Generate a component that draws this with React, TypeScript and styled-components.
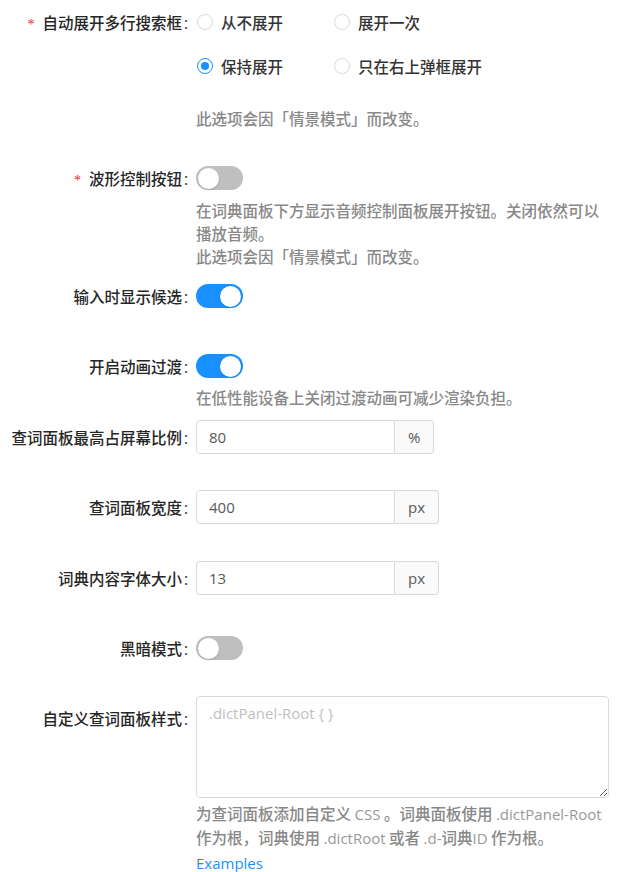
import React from "react";
import styled, { createGlobalStyle } from "styled-components";

const GlobalStyle = createGlobalStyle`
  html, body { margin: 0; padding: 0; background: #fff; }
  body {
    font-family: "Open Sans", "Noto Sans CJK SC", sans-serif;
    font-size: 15px;
    color: rgba(0, 0, 0, 0.85);
  }
  * { box-sizing: border-box; }
`;

const Form = styled.div`
  width: 633px;
  padding: 0 24px 0 0;
`;

const Item = styled.div<{ $mt: number }>`
  display: grid;
  grid-template-columns: 196px 1fr;
  margin-top: ${(p) => p.$mt}px;
`;

const Label = styled.div<{ $h: number }>`
  height: ${(p) => p.$h}px;
  line-height: ${(p) => p.$h}px;
  text-align: right;
  padding-right: 8px;
  font-family: "Noto Sans CJK SC", sans-serif;
  font-size: 15.5px;
  font-weight: 500;
  color: #262626;
  white-space: nowrap;
  &::after {
    content: ":";
    margin-left: 2px;
    font-family: "Open Sans", sans-serif;
  }
`;

const Required = styled.span`
  color: #f5222d;
  font-family: "Liberation Serif", serif;
  font-size: 14px;
  margin-right: 8px;
`;

const Control = styled.div`
  display: flex;
  flex-direction: column;
  align-items: flex-start;
  min-width: 0;
`;

const Line = styled.div<{ $h: number }>`
  height: ${(p) => p.$h}px;
  display: flex;
  align-items: center;
`;

const RadioGrid = styled.div`
  display: grid;
  grid-template-columns: 137px 170px;
  grid-auto-rows: 44px;
`;

const RadioItem = styled.label`
  display: flex;
  align-items: center;
  cursor: pointer;
  font-family: "Noto Sans CJK SC", sans-serif;
  font-size: 15.5px;
  font-weight: 500;
  color: #333;
  white-space: nowrap;
`;

const RadioCircle = styled.span<{ $on: boolean }>`
  width: 16px;
  height: 16px;
  margin-left: 1px;
  border-radius: 50%;
  border: 1px solid ${(p) => (p.$on ? "#1890ff" : "#d9d9d9")};
  background: #fff;
  display: flex;
  align-items: center;
  justify-content: center;
  margin-right: 8px;
  flex: none;
  &::after {
    content: "";
    width: 8px;
    height: 8px;
    border-radius: 50%;
    background: #1890ff;
    display: ${(p) => (p.$on ? "block" : "none")};
  }
`;

const Help = styled.div<{ $mt: number }>`
  margin-top: ${(p) => p.$mt}px;
  line-height: 23px;
  color: #888;
  font-family: "Noto Sans CJK SC", sans-serif;
  font-size: 15.5px;
  font-weight: 500;
`;

const Latin = styled.span`
  font-family: "Open Sans", sans-serif;
  font-size: 15px;
  font-weight: 400;
  color: #999;
`;

const Switch = styled.button<{ $on: boolean }>`
  position: relative;
  width: 47px;
  height: 24px;
  border: none;
  border-radius: 12px;
  padding: 0;
  margin: 0;
  cursor: pointer;
  background: ${(p) => (p.$on ? "#1890ff" : "#bfbfbf")};
  &::after {
    content: "";
    position: absolute;
    top: 1.5px;
    left: ${(p) => (p.$on ? "24px" : "1.5px")};
    width: 21px;
    height: 21px;
    border-radius: 50%;
    background: #fff;
    box-shadow: 0 1px 2px rgba(0, 0, 0, 0.15);
  }
`;

const InputGroup = styled.div`
  display: flex;
  height: 34px;
`;

const Input = styled.input`
  width: 199px;
  height: 34px;
  border: 1px solid #d9d9d9;
  border-radius: 4px 0 0 4px;
  padding: 0 12px;
  font-family: "Open Sans", sans-serif;
  font-size: 15px;
  color: #595959;
  outline: none;
`;

const Addon = styled.span`
  display: flex;
  align-items: center;
  height: 34px;
  padding: 0 13px;
  border: 1px solid #d9d9d9;
  border-left: none;
  border-radius: 0 4px 4px 0;
  background: #fafafa;
  color: #595959;
  font-family: "Open Sans", sans-serif;
  font-size: 15px;
`;

const TextArea = styled.textarea`
  width: 413px;
  height: 102px;
  border: 1px solid #d9d9d9;
  border-radius: 4px;
  padding: 5px 12px;
  line-height: 23px;
  font-family: "Open Sans", sans-serif;
  font-size: 15px;
  color: #595959;
  resize: vertical;
  outline: none;
  display: block;
  &::placeholder { color: #bfbfbf; }
`;

const Link = styled.a`
  color: #1890ff;
  text-decoration: none;
  font-family: "Open Sans", sans-serif;
  line-height: 23px;
  margin-top: 2px;
`;

const Radio = ({ on, children }: { on: boolean; children: React.ReactNode }) => (
  <RadioItem>
    <RadioCircle $on={on} />
    {children}
  </RadioItem>
);

const NumberField = ({ value, unit }: { value: string; unit: string }) => (
  <InputGroup>
    <Input defaultValue={value} />
    <Addon>{unit}</Addon>
  </InputGroup>
);

export default function App() {
  return (
    <>
      <GlobalStyle />
      <Form>
        <Item $mt={0}>
          <Label $h={44}>
            <Required>*</Required>自动展开多行搜索框
          </Label>
          <Control>
            <RadioGrid>
              <Radio on={false}>从不展开</Radio>
              <Radio on={false}>展开一次</Radio>
              <Radio on={true}>保持展开</Radio>
              <Radio on={false}>只在右上弹框展开</Radio>
            </RadioGrid>
            <Help $mt={19}>此选项会因「情景模式」而改变。</Help>
          </Control>
        </Item>

        <Item $mt={32}>
          <Label $h={32}>
            <Required>*</Required>波形控制按钮
          </Label>
          <Control>
            <Line $h={32}>
              <Switch $on={false} />
            </Line>
            <Help $mt={5}>
              在词典面板下方显示音频控制面板展开按钮。关闭依然可以播放音频。
              <br />
              此选项会因「情景模式」而改变。
            </Help>
          </Control>
        </Item>

        <Item $mt={12}>
          <Label $h={32}>输入时显示候选</Label>
          <Control>
            <Line $h={32}>
              <Switch $on={true} />
            </Line>
          </Control>
        </Item>

        <Item $mt={38}>
          <Label $h={32}>开启动画过渡</Label>
          <Control>
            <Line $h={32}>
              <Switch $on={true} />
            </Line>
            <Help $mt={4}>在低性能设备上关闭过渡动画可减少渲染负担。</Help>
          </Control>
        </Item>

        <Item $mt={11}>
          <Label $h={34}>查词面板最高占屏幕比例</Label>
          <Control>
            <NumberField value="80" unit="%" />
          </Control>
        </Item>

        <Item $mt={36}>
          <Label $h={34}>查词面板宽度</Label>
          <Control>
            <NumberField value="400" unit="px" />
          </Control>
        </Item>

        <Item $mt={37}>
          <Label $h={34}>词典内容字体大小</Label>
          <Control>
            <NumberField value="13" unit="px" />
          </Control>
        </Item>

        <Item $mt={37}>
          <Label $h={32}>黑暗模式</Label>
          <Control>
            <Line $h={32}>
              <Switch $on={false} />
            </Line>
          </Control>
        </Item>

        <Item $mt={32}>
          <Label $h={44}>自定义查词面板样式</Label>
          <Control>
            <TextArea placeholder=".dictPanel-Root { }" />
            <Help $mt={4}>
              为查词面板添加自定义 <Latin>CSS</Latin> 。词典面板使用 <Latin>.dictPanel-Root</Latin>{" "}
              作为根，词典使用 <Latin>.dictRoot</Latin> 或者 <Latin>.d-</Latin>词典<Latin>ID</Latin> 作为根。
            </Help>
            <Link href="#">Examples</Link>
          </Control>
        </Item>
      </Form>
    </>
  );
}
